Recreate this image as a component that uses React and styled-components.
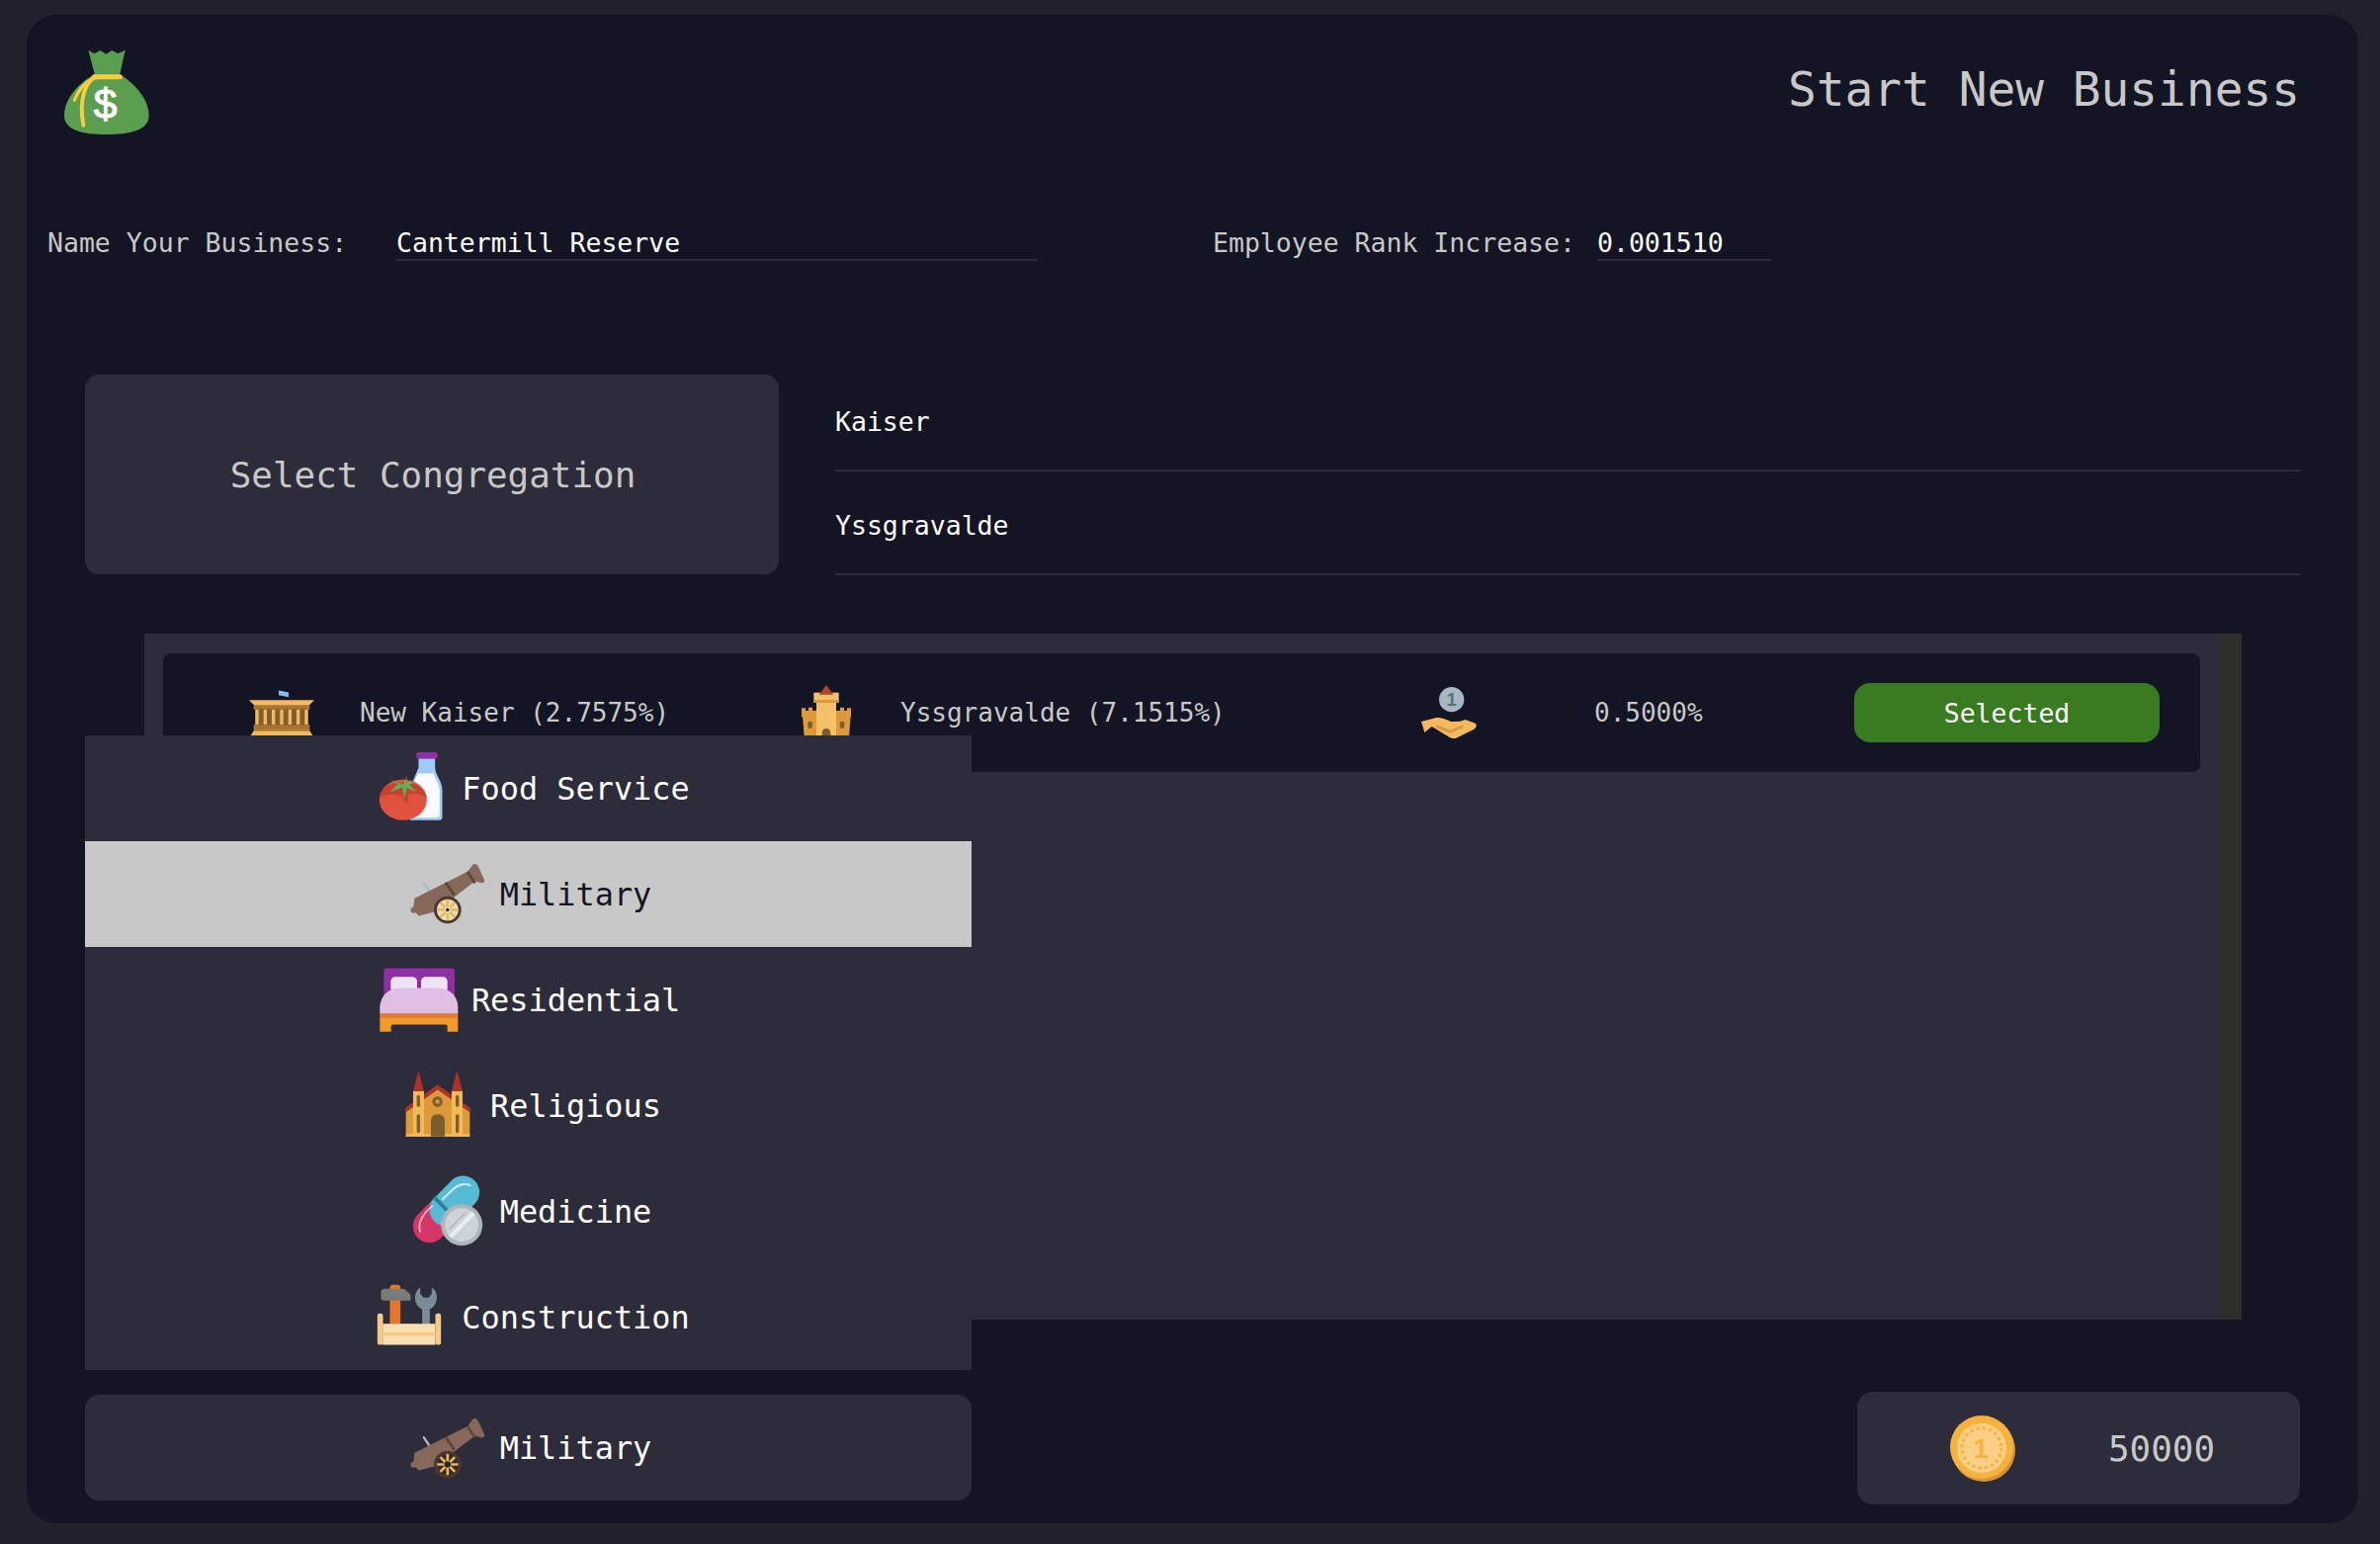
import React from "react";
import styled, { createGlobalStyle } from "styled-components";

const Global = createGlobalStyle`
  html, body { margin: 0; padding: 0; background: #20212c; }
  body { font-family: "DejaVu Sans Mono", "Liberation Mono", monospace; }
  * { box-sizing: border-box; }
`;

const Page = styled.div`
  width: 2408px;
  height: 1562px;
  padding: 15px 22px 21px 27px;
  background: #20212c;
`;
const Panel = styled.main`
  position: relative;
  height: 1526px;
  background: #141524;
  border-radius: 30px;
  overflow: hidden;
`;
const Header = styled.header`
  display: flex;
  justify-content: space-between;
  align-items: center;
  padding: 35px 59px 0 38px;
`;
const Title = styled.h1`
  margin: 0 0 6px;
  font-size: 47.8px;
  font-weight: 400;
  color: #c8c8c8;
`;
const FormRow = styled.div`
  display: flex;
  align-items: flex-end;
  margin-top: 90px;
  padding-left: 21px;
  height: 38px;
`;
const Label = styled.span`
  font-size: 26.5px;
  line-height: 36px;
  color: #c8c8c8;
  width: ${(p) => p.$w}px;
  margin-left: ${(p) => p.$ml || 0}px;
`;
const Field = styled.div`
  width: ${(p) => p.$w}px;
  height: 38px;
  padding-top: 3px;
  font-size: 26.5px;
  line-height: 34px;
  color: #fff;
  border-bottom: 2px solid #2d2c3a;
`;
const CongregationSection = styled.section`
  display: flex;
  align-items: flex-start;
  gap: 57px;
  height: 210px;
  margin-top: 107px;
  padding: 0 59px;
`;
const SelectBox = styled.div`
  flex: 0 0 702px;
  height: 202px;
  margin-top: 8px;
  padding-left: 2px;
  display: flex;
  align-items: center;
  justify-content: center;
  background: #2d2c3a;
  border-radius: 14px;
  font-size: 35.9px;
  color: #c8c8c8;
`;
const Options = styled.div`
  flex: 1;
  margin-top: 1px;
`;
const Option = styled.div`
  height: 105px;
  padding-top: 37px;
  font-size: 26.5px;
  line-height: 36px;
  color: #fff;
  border-bottom: 2px solid #2d2c3a;
`;
const ListWrap = styled.section`
  display: flex;
  height: 694px;
  margin: 60px 118px 0 119px;
`;
const List = styled.div`
  flex: 1;
  padding: 20px 21px 0 19px;
  background: #2d2c3a;
`;
const Scrollbar = styled.div`
  flex: 0 0 21px;
  background: #2e2e2b;
`;
const Row = styled.div`
  display: grid;
  grid-template-columns: 112px 447px 100px 527px 175px 263px 309px;
  align-items: center;
  height: 120px;
  padding-left: 87px;
  background: #141524;
  border-radius: 8px;
  font-size: 26px;
  color: #c8c8c8;
`;
const Selected = styled.div`
  height: 60px;
  display: flex;
  align-items: center;
  justify-content: center;
  background: #397b20;
  border-radius: 16px;
  font-size: 26.5px;
  color: #fff;
`;
const Dropdown = styled.div`
  position: absolute;
  left: 59px;
  top: 729px;
  width: 897px;
  background: #2d2c3a;
`;
const Item = styled.div`
  height: 107px;
  display: flex;
  align-items: center;
  justify-content: center;
  gap: 13px;
  padding-left: 3px;
  font-size: 31.9px;
  background: ${(p) => (p.$active ? "#c8c8c8" : "transparent")};
  color: ${(p) => (p.$active ? "#141524" : "#fff")};
`;
const Bottom = styled.footer`
  display: flex;
  justify-content: space-between;
  align-items: flex-start;
  margin-top: 73px;
  padding: 0 59px;
`;
const Chosen = styled(Item)`
  width: 897px;
  margin-top: 3px;
  background: #2d2c3a;
  border-radius: 14px;
`;
const Balance = styled.div`
  width: 448px;
  height: 114px;
  display: grid;
  grid-template-columns: 94px 66px 1fr;
  align-items: center;
  background: #2d2c3a;
  border-radius: 16px;
  font-size: 35.9px;
  color: #c8c8c8;
`;
const Amount = styled.span`
  padding-left: 94px;
`;
const Glyph = styled.svg`
  display: block;
  flex: none;
`;

const Icon = ({ box, w = 80, h = 80, children, ...rest }) => (
  <Glyph viewBox={box} width={w} height={h} {...rest}>{children}</Glyph>
);

const Bag = () => (
  <Icon box="135 90 258 258" w={86} h={86}>
    <path d="M208 92 L226 103 L244 93 L262 104 L280 93 L298 103 L320 92 L303 168 L228 168Z" fill="#5c9e4f" />
    <path d="M228 165C180 190 135 240 135 290C135 335 190 348 262 348C335 348 392 335 392 290C392 240 345 190 303 165Z" fill="#5c9e4f" />
    <path d="M226 173H304" stroke="#f6cd3f" strokeWidth="15" strokeLinecap="round" fill="none" />
    <path d="M232 173C202 184 178 236 193 320" stroke="#f6cd3f" strokeWidth="12" strokeLinecap="round" fill="none" />
    <path d="M226 176C198 190 176 214 166 244" stroke="#f6cd3f" strokeWidth="10" strokeLinecap="round" fill="none" />
    <text x="260" y="300" textAnchor="middle" fontFamily="Liberation Sans, sans-serif" fontWeight="400" fontSize="128" stroke="#fff" strokeWidth="3" fill="#fff">$</text>
  </Icon>
);

const Food = () => (
  <Icon box="103.5 52.5 240 240">
    <path d="M252 80H302V108C302 130 324 150 324 176V258Q324 268 314 268H226V170L252 108Z" fill="#a0cbf7" />
    <rect x="245" y="61" width="64" height="20" rx="6" fill="#8e2fa6" />
    <path d="M250 126H298C304 146 316 160 316 178V252Q316 260 308 260H230V170Z" fill="#fbfbfd" />
    <ellipse cx="205" cy="206" rx="72" ry="62" fill="#e0523d" />
    <path d="M133 200C136 170 170 152 205 153C240 152 272 170 277 200C262 186 238 186 222 190L218 220L198 194C176 186 150 188 133 200Z" fill="#c9402e" />
    <path d="M206 160L164 144L190 158L162 184L203 168L208 204L216 170L248 182L224 160L246 150L214 152L218 130Z" fill="#5cb25a" />
  </Icon>
);

const Cannon = ({ box, wheel }) => (
  <Icon box={box}>
    <path d="M265 458L281 482" stroke="#a9bcc9" strokeWidth="7" strokeLinecap="round" fill="none" />
    <circle cx="234" cy="541" r="9" fill="#86695a" />
    <path d="M237 505L398 424L414 402Q424 398 430 408L449 450Q450 460 438 458L420 453L300 545L250 558L232 540Z" fill="#86695a" />
    <path d="M331 457L358 496" stroke="#5f4638" strokeWidth="9" fill="none" />
    <path d="M397 424L420 459" stroke="#5f4638" strokeWidth="8" fill="none" />
    <circle cx="337" cy="540" r="37" fill={wheel} stroke="#4d382e" strokeWidth="9" />
    <g stroke="#f4b740" strokeWidth="8" fill="none">
      <path d="M337 508V530M337 550V572M305 540H327M347 540H369M315 518L330 533M344 547L359 562M359 518L344 533M330 547L315 562" />
    </g>
    <circle cx="337" cy="540" r="5" fill="#2d2019" />
  </Icon>
);

const Bed = () => (
  <Icon box="72 334.5 240 240">
    <rect x="85" y="357" width="215" height="110" rx="10" fill="#8e2fa6" />
    <rect x="106" y="383" width="80" height="50" rx="14" fill="#efe4f6" />
    <rect x="198" y="383" width="80" height="50" rx="14" fill="#efe4f6" />
    <path d="M73 496V472Q80 418 140 417H245Q305 420 310 472V496Z" fill="#dfc0e4" />
    <rect x="73" y="495" width="237" height="13" fill="#e87a2e" />
    <path d="M73 507H310V550H278V534Q278 528 272 528H113Q107 528 107 534V550H73Z" fill="#f29a2e" />
  </Icon>
);

const Church = () => (
  <Icon box="129 655.5 240 240">
    <path d="M152 782L248 712L346 782V868H152Z" fill="#dc9a3a" />
    <path d="M152 780L248 712L346 780V794L248 726L152 794Z" fill="#ae3229" />
    <rect x="174" y="730" width="33" height="138" fill="#f2b957" />
    <rect x="291" y="730" width="33" height="138" fill="#f2b957" />
    <path d="M174 730L190 668L207 730Z" fill="#ae3229" />
    <path d="M291 730L307 668L324 730Z" fill="#ae3229" />
    <rect x="152" y="860" width="194" height="8" fill="#f2b957" />
    <rect x="185" y="742" width="10" height="36" rx="5" fill="#7c5d2e" />
    <rect x="303" y="742" width="10" height="36" rx="5" fill="#7c5d2e" />
    <rect x="185" y="800" width="10" height="57" rx="5" fill="#7c5d2e" />
    <rect x="303" y="800" width="10" height="57" rx="5" fill="#7c5d2e" />
    <circle cx="248" cy="762" r="11" fill="#dc9a3a" stroke="#7c5d2e" strokeWidth="9" />
    <path d="M228 868V821Q228 800 249 800Q270 800 270 821V868Z" fill="#7c5d2e" />
  </Icon>
);

const Pills = () => (
  <Icon box="157.5 376.5 240 240">
    <path d="M222 540L268 494" stroke="#d73566" strokeWidth="100" strokeLinecap="round" fill="none" />
    <path d="M272 490L324 437" stroke="#56bad4" strokeWidth="100" strokeLinecap="round" fill="none" />
    <path d="M236 452L276 492" stroke="#2f7f97" strokeWidth="11" fill="none" />
    <path d="M194 556C184 530 205 498 232 478" stroke="#f3c3d1" strokeWidth="5" strokeLinecap="round" fill="none" />
    <path d="M262 458L298 424C314 412 330 410 345 416" stroke="#cfeef6" strokeWidth="6" strokeLinecap="round" fill="none" />
    <circle cx="320" cy="536" r="63" fill="#aeb6bc" />
    <circle cx="320" cy="536" r="51" fill="#ccd3d9" />
    <path d="M285 572L356 500" stroke="#e9edf0" strokeWidth="13" fill="none" />
    <path d="M283 548L332 499" stroke="#aeb6bc" strokeWidth="4" fill="none" />
  </Icon>
);

const Tools = () => (
  <Icon box="43.5 697.5 240 240">
    <path d="M105 728Q105 718 115 718H127Q137 718 137 728V836H105Z" fill="#e5772c" />
    <path d="M78 740Q78 730 90 730H148L168 748V766H88Q78 766 78 756Z" fill="#7a7a7a" />
    <path d="M197 726C175 740 176 780 203 792V836H226V792C252 780 255 740 232 726V745L223 757H207L197 745Z" fill="#7b8c99" />
    <rect x="83" y="836" width="160" height="64" fill="#fbdfb0" />
    <rect x="83" y="862" width="160" height="10" fill="#f5c987" />
    <rect x="67" y="805" width="17" height="95" rx="6" fill="#f5c987" />
    <rect x="243" y="805" width="17" height="95" rx="6" fill="#f5c987" />
  </Icon>
);

const Pantheon = () => (
  <Icon box="38 35 198 140" w={66} h={47}>
    <path d="M128 36L158 42V56L128 50Z" fill="#7fc4ef" />
    <path d="M38 65H236L220 82H54Z" fill="#f2b95e" />
    <rect x="52" y="82" width="170" height="12" fill="#a9762f" />
    <rect x="57" y="94" width="160" height="46" fill="#7f5f30" />
    {[57, 82, 107, 132, 157, 182, 207].map((x) => (
      <rect key={x} x={x} y="94" width="10" height="46" fill="#f2b95e" />
    ))}
    <rect x="52" y="140" width="170" height="18" fill="#a9762f" />
    <path d="M52 158H222L232 175H42Z" fill="#f2b95e" />
  </Icon>
);

const Castle = () => (
  <Icon box="35 25 150 171" w={50} h={57}>
    <path d="M38 118H184L178 196H44Z" fill="#dc9a3a" />
    <path d="M35 95H47V103H56V93H68V103H80V122H35Z M185 95H173V103H164V93H152V103H140V122H185Z" fill="#dc9a3a" />
    <rect x="80" y="78" width="60" height="118" fill="#f6c06b" />
    <rect x="72" y="48" width="76" height="30" fill="#f6c06b" />
    <rect x="72" y="70" width="76" height="8" fill="#dc9a3a" />
    <path d="M88 54L110 25L132 54Z" fill="#b0412a" />
    <rect x="54" y="135" width="14" height="22" rx="7" fill="#7c5d2e" />
    <rect x="151" y="135" width="14" height="22" rx="7" fill="#7c5d2e" />
    <path d="M97 196V172Q97 157 110 157Q123 157 123 172V196Z" fill="#7c5d2e" />
  </Icon>
);

const HandCoin = () => (
  <Icon box="40 30 168 156" w={56} h={52}>
    <circle cx="132" cy="68" r="38" fill="#a9b7c2" />
    <text x="132" y="88" textAnchor="middle" fontFamily="Liberation Sans, sans-serif" fontWeight="700" fontSize="56" fill="#5d6f7d">1</text>
    <path d="M40 135L86 123Q102 121 130 135L158 134L174 129L204 140Q212 150 200 158L146 185Q135 189 125 182L72 150L50 168Z" fill="#f4b85e" />
    <path d="M90 150L128 166L164 150" stroke="#d99a47" strokeWidth="9" strokeLinecap="round" fill="none" />
  </Icon>
);

const Coin = () => (
  <Icon box="0 0 66 67" w={66} h={67}>
    <circle cx="34" cy="35" r="32" fill="#d6962f" />
    <circle cx="32" cy="32" r="32" fill="#f6b23f" />
    <circle cx="32" cy="33" r="25" fill="#fbcf86" />
    <circle cx="32" cy="33" r="20" fill="none" stroke="#f6b23f" strokeWidth="3" strokeDasharray="3 3.3" />
    <text x="31" y="43" textAnchor="middle" fontFamily="Liberation Sans, sans-serif" fontWeight="700" fontSize="28" fill="#f6b23f">1</text>
  </Icon>
);

const items = [
  { name: "Food Service", Art: Food },
  { name: "Military", active: true },
  { name: "Residential", Art: Bed },
  { name: "Religious", Art: Church },
  { name: "Medicine", Art: Pills },
  { name: "Construction", Art: Tools },
];

export default function App() {
  return (
    <Page>
      <Global />
      <Panel>
        <Header>
          <Bag />
          <Title>Start New Business</Title>
        </Header>
        <FormRow>
          <Label $w={353}>Name Your Business:</Label>
          <Field $w={648}>Cantermill Reserve</Field>
          <Label $w={389} $ml={178}>Employee Rank Increase:</Label>
          <Field $w={176}>0.001510</Field>
        </FormRow>
        <CongregationSection>
          <SelectBox>Select Congregation</SelectBox>
          <Options>
            <Option>Kaiser</Option>
            <Option>Yssgravalde</Option>
          </Options>
        </CongregationSection>
        <ListWrap>
          <List>
            <Row>
              <Pantheon />
              <span>New Kaiser (2.7575%)</span>
              <Castle />
              <span>Yssgravalde (7.1515%)</span>
              <HandCoin />
              <span>0.5000%</span>
              <Selected>Selected</Selected>
            </Row>
          </List>
          <Scrollbar />
        </ListWrap>
        <Bottom>
          <Chosen>
            <Cannon box="217.5 370.5 240 240" wheel="#2d2c3a" />
            <span>Military</span>
          </Chosen>
          <Balance>
            <span />
            <Coin />
            <Amount>50000</Amount>
          </Balance>
        </Bottom>
        <Dropdown>
          {items.map(({ name, active, Art }) => (
            <Item key={name} $active={active}>
              {Art ? <Art /> : <Cannon box="217.5 373.5 240 240" wheel="#e2dccd" />}
              <span>{name}</span>
            </Item>
          ))}
        </Dropdown>
      </Panel>
    </Page>
  );
}
